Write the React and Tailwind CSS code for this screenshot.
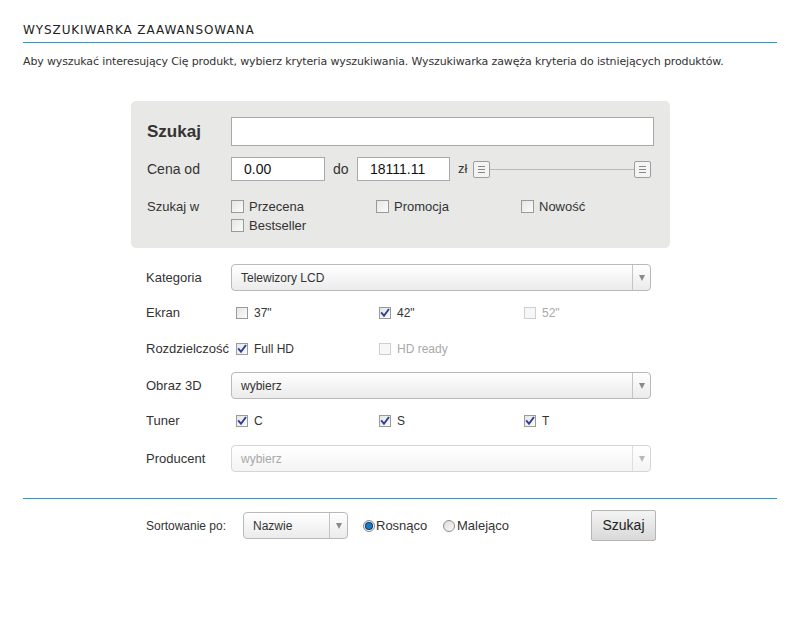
import React from 'react'

const FONT = { fontFamily: '"Liberation Sans", Arial, sans-serif' }
const TAHOMA = { fontFamily: '"DejaVu Sans", Tahoma, sans-serif' }

function Box({ checked, disabled, big }) {
  return (
    <span
      className={
        'relative inline-flex shrink-0 items-center justify-center border ' +
        (big ? 'w-[13px] h-[13px] ' : 'w-[12px] h-[12px] ') +
        (disabled
          ? 'border-[#cfcfcf] bg-[#f7f7f7]'
          : 'border-[#9a9a9a] bg-gradient-to-br from-[#e6e6e6] to-[#fbfbfb]')
      }
    >
      {checked && (
        <svg width="10" height="10" viewBox="0 0 10 10" className="absolute">
          <path d="M1.8 5.2 L4 7.8 L8.4 1.8" fill="none" stroke="#2b3f96" strokeWidth="1.9" strokeLinecap="square" />
        </svg>
      )}
    </span>
  )
}

function Opt({ label, checked, disabled, big, w = 'w-[145px]' }) {
  return (
    <div className={'flex items-center ' + (big ? 'gap-[5px] ' : 'gap-[6px] ') + w}>
      <Box checked={checked} disabled={disabled} big={big} />
      <span className={(big ? 'text-[13px] leading-[17px] ' : 'text-[12px] leading-[14px] ') + (disabled ? 'text-[#a9a9a9]' : 'text-[#333]')}>{label}</span>
    </div>
  )
}

function Select({ value, disabled, w = 'w-[420px]' }) {
  return (
    <div
      className={
        'flex h-[27px] items-stretch rounded-[4px] border ' +
        w +
        (disabled
          ? ' border-[#d6d6d6] bg-gradient-to-b from-white to-[#f4f4f4]'
          : ' border-[#b9b9b9] bg-gradient-to-b from-white to-[#ebebeb]')
      }
    >
      <div className={'flex flex-1 items-center pl-[9px] text-[12px] ' + (disabled ? 'text-[#a8a8a8]' : 'text-[#333]')}>
        {value}
      </div>
      <div className={'flex w-[18px] items-center justify-center border-l ' + (disabled ? 'border-[#dedede]' : 'border-[#c4c4c4]')}>
        <span className={'h-0 w-0 border-x-[3px] border-t-[6px] border-x-transparent ' + (disabled ? 'border-t-[#b8b8b8]' : 'border-t-[#8a8a8a]')} />
      </div>
    </div>
  )
}

function Handle() {
  return (
    <div className="flex h-[17px] w-[17px] shrink-0 flex-col items-center justify-center gap-[2px] rounded-[2px] border border-[#9e9e9e] bg-[#f4f4f4]">
      <span className="h-px w-[7px] bg-[#888]" />
      <span className="h-px w-[7px] bg-[#888]" />
      <span className="h-px w-[7px] bg-[#888]" />
    </div>
  )
}

function Radio({ checked }) {
  return (
    <span className="inline-flex h-[12px] w-[12px] shrink-0 items-center justify-center rounded-full border border-[#8c8c8c] bg-gradient-to-br from-[#dcdcdc] to-[#fafafa]">
      {checked && <span className="h-[6px] w-[6px] rounded-full bg-[#1b78c4] ring-1 ring-[#0d3f6c]" />}
    </span>
  )
}

function Row({ label, children, className = '' }) {
  return (
    <div className={'flex items-center ' + className}>
      <div className="w-[85px] text-[13px] leading-[16px] text-[#333]">{label}</div>
      {children}
    </div>
  )
}

export default function App() {
  return (
    <div className="min-h-[620px] w-[800px] bg-white pt-[23px] px-[23px]" style={FONT}>
      <h1 className="pb-[5px] text-[12px] leading-[14px] tracking-[0.9px] text-[#222]" style={TAHOMA}>
        WYSZUKIWARKA ZAAWANSOWANA
      </h1>
      <div className="h-px bg-[#1a9ed6]" />
      <p className="mt-[12px] text-[11px] leading-[13px] tracking-[-0.13px] text-[#333]" style={TAHOMA}>
        Aby wyszukać interesujący Cię produkt, wybierz kryteria wyszukiwania. Wyszukiwarka zawęża kryteria do istniejących produktów.
      </p>

      {/* panel */}
      <div className="ml-[108px] mt-[33px] w-[539px] rounded-[5px] bg-[#e8e8e6] pl-[16px] pr-[16px] pt-[16px] pb-[14px]">
        <div className="flex items-center">
          <div className="w-[84px] text-[17px] leading-[20px] font-bold text-[#333]">Szukaj</div>
          <div className="h-[29px] flex-1 border border-[#a9a9a9] bg-white" />
        </div>
        <div className="mt-[11px] flex items-center">
          <div className="w-[84px] text-[14px] text-[#333]">Cena od</div>
          <div className="flex h-[24px] w-[94px] items-center border border-[#a9a9a9] bg-white pl-[12px] text-[14px] text-[#111]">0.00</div>
          <div className="w-[32px] pl-[8px] text-[14px] text-[#333]">do</div>
          <div className="flex h-[24px] w-[93px] items-center border border-[#a9a9a9] bg-white pl-[12px] text-[14px] text-[#111]">18111.11</div>
          <div className="w-[23px] pl-[8px] text-[13px] text-[#333]">zł</div>
          <div className="flex flex-1 items-center pr-[3px]">
            <Handle />
            <div className="h-px flex-1 bg-[#b9b9b9]" />
            <Handle />
          </div>
        </div>
        <div className="mt-[17px] flex items-start">
          <div className="w-[84px] text-[13px] leading-[17px] text-[#333]">Szukaj w</div>
          <div className="flex w-[400px] flex-wrap gap-y-[2px]">
            <Opt label="Przecena" big />
            <Opt label="Promocja" big />
            <Opt label="Nowość" big w="w-[100px]" />
            <Opt label="Bestseller" big />
          </div>
        </div>
      </div>

      <div className="ml-[123px]">
        <Row label="Kategoria" className="mt-[16px]">
          <Select value="Telewizory LCD" />
        </Row>
        <Row label="Ekran" className="mt-[11px] h-[22px]">
          <div className="flex pl-[5px]">
            <Opt label={'37"'} w="w-[143px]" />
            <Opt label={'42"'} checked />
            <Opt label={'52"'} disabled />
          </div>
        </Row>
        <Row label="Rozdzielczość" className="mt-[14px] h-[22px]">
          <div className="flex pl-[5px]">
            <Opt label="Full HD" checked w="w-[143px]" />
            <Opt label="HD ready" disabled />
          </div>
        </Row>
        <Row label="Obraz 3D" className="mt-[12px]">
          <Select value="wybierz" />
        </Row>
        <Row label="Tuner" className="mt-[11px] h-[22px]">
          <div className="flex pl-[5px]">
            <Opt label="C" checked w="w-[143px]" />
            <Opt label="S" checked />
            <Opt label="T" checked />
          </div>
        </Row>
        <Row label="Producent" className="mt-[13px]">
          <Select value="wybierz" disabled />
        </Row>
      </div>

      <div className="mt-[26px] h-px bg-[#1ba0d8]" />

      <div className="ml-[123px] mt-[11px] flex items-center">
        <div className="w-[97px] text-[12px] text-[#333]">Sortowanie po:</div>
        <Select value="Nazwie" w="w-[105px]" />
        <div className="ml-[15px] flex w-[80px] items-center gap-[1px]">
          <Radio checked />
          <span className="text-[13px] text-[#333]">Rosnąco</span>
        </div>
        <div className="flex w-[148px] items-center gap-[2px]">
          <Radio />
          <span className="text-[13px] text-[#333]">Malejąco</span>
        </div>
        <button className="h-[31px] w-[65px] rounded-[2px] border border-[#b5b5b5] bg-gradient-to-b from-[#f4f4f4] to-[#d9d9d9] text-[14px] text-[#222]">
          Szukaj
        </button>
      </div>
    </div>
  )
}
